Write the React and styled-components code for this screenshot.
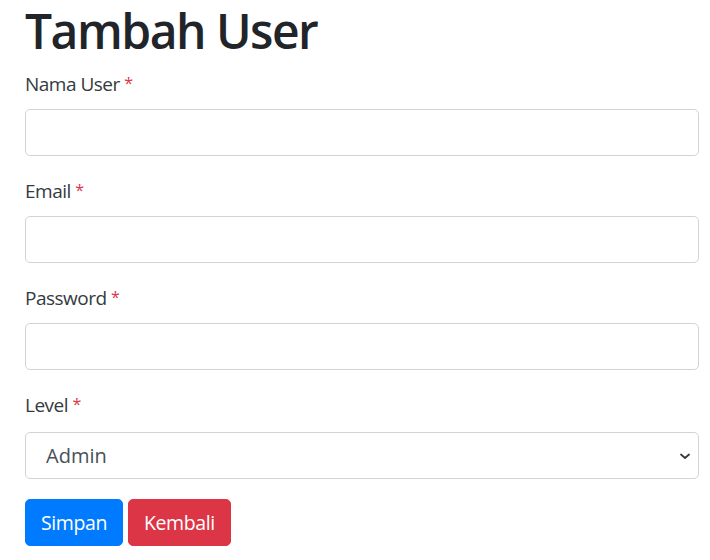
import React from "react";
import styled, { createGlobalStyle } from "styled-components";

const Global = createGlobalStyle`
  html, body { margin: 0; padding: 0; background: #fff; }
  body {
    font-family: "Open Sans", "Noto Sans", Arial, sans-serif;
    font-size: 20px;
    line-height: 1.5;
    color: #212529;
  }
  * { box-sizing: border-box; }
`;

const Page = styled.div`
  padding: 1px 11px 0 25px;
`;

const Title = styled.h1`
  margin: 0 0 8px;
  font-size: 48px;
  font-weight: 600;
  letter-spacing: -1.5px;
  line-height: 60px;
  color: #212529;
`;

const Form = styled.form`
  display: flex;
  flex-direction: column;
`;

const Group = styled.div`
  display: flex;
  flex-direction: column;
  margin-bottom: 20px;
`;

const Label = styled.label`
  display: block;
  height: 30px;
  margin-bottom: 10px;
  font-size: 19px;
  line-height: 30px;
  letter-spacing: -0.5px;
  color: #343a40;
`;

const Req = styled.span`
  color: #dc3545;
  font-size: 16px;
  line-height: 1;
  vertical-align: 2px;
`;

const Input = styled.input`
  display: block;
  width: 100%;
  height: 47px;
  padding: 7.5px 15px;
  font: inherit;
  color: #495057;
  background: #fff;
  border: 1px solid #ced4da;
  border-radius: 5px;
  outline: none;
`;

const SelectWrap = styled.div`
  position: relative;
  margin-top: 2px;
`;

const Select = styled.select`
  display: block;
  width: 100%;
  height: 47px;
  padding: 7.5px 15px 7.5px 20px;
  font: inherit;
  color: #495057;
  background: #fff;
  border: 1px solid #ced4da;
  border-radius: 5px;
  appearance: none;
  -webkit-appearance: none;
  outline: none;
`;

const Chevron = styled.svg`
  position: absolute;
  right: 8px;
  top: 50%;
  transform: translateY(-50%);
  width: 12px;
  height: 12px;
  pointer-events: none;
`;

const Actions = styled.div`
  display: flex;
  gap: 5px;
`;

const Button = styled.button`
  height: 47px;
  padding: 7.5px 15px;
  font: inherit;
  font-size: 19.5px;
  letter-spacing: -0.4px;
  line-height: 30px;
  color: #fff;
  background: ${(p) => (p.$variant === "danger" ? "#dc3545" : "#007bff")};
  border: 1px solid ${(p) => (p.$variant === "danger" ? "#dc3545" : "#007bff")};
  border-radius: 5px;
  cursor: pointer;
`;

function Field({ label, type = "text" }) {
  return (
    <Group>
      <Label>
        {label} <Req>*</Req>
      </Label>
      <Input type={type} />
    </Group>
  );
}

export default function App() {
  return (
    <Page>
      <Global />
      <Title>Tambah User</Title>
      <Form onSubmit={(e) => e.preventDefault()}>
        <Field label="Nama User" />
        <Field label="Email" type="email" />
        <Field label="Password" type="password" />
        <Group>
          <Label>
            Level <Req>*</Req>
          </Label>
          <SelectWrap>
            <Select defaultValue="admin">
              <option value="admin">Admin</option>
              <option value="user">User</option>
            </Select>
            <Chevron viewBox="0 0 12 12">
              <path d="M2 4.5 L6 8 L10 4.5" fill="none" stroke="#343a40" strokeWidth="1.8" strokeLinecap="round" strokeLinejoin="round" />
            </Chevron>
          </SelectWrap>
        </Group>
        <Actions>
          <Button type="submit">Simpan</Button>
          <Button type="button" $variant="danger">Kembali</Button>
        </Actions>
      </Form>
    </Page>
  );
}
